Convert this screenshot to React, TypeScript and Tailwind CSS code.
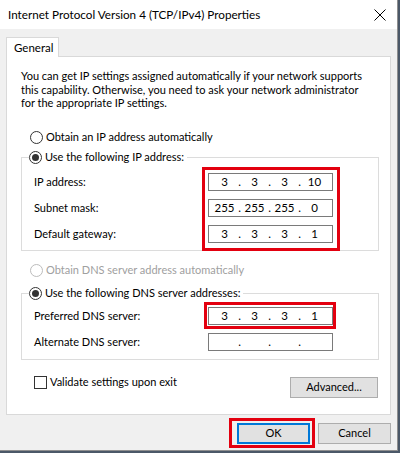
import React from "react";

const FONT = "font-['Lato','Noto_Sans',sans-serif]";

function Radio({ checked = false, disabled = false }: { checked?: boolean; disabled?: boolean }) {
  return (
    <span
      className={`w-[13px] h-[13px] shrink-0 rounded-full border bg-white flex items-center justify-center ${
        disabled ? "border-[#bcbcbc]" : "border-[#333333]"
      }`}
    >
      {checked && <span className="w-[7px] h-[7px] rounded-full bg-[#333333]" />}
    </span>
  );
}

function IpBox({ parts }: { parts: string[] }) {
  return (
    <div className="w-[125px] h-[18px] border border-[#7a7a7a] bg-white flex items-center pl-[4px] leading-none text-[11.5px]">
      {parts.map((p, i) => (
        <React.Fragment key={i}>
          <span className="w-[23px] text-center">{p}</span>
          {i < 3 && <span className="w-[7px] text-center">.</span>}
        </React.Fragment>
      ))}
    </div>
  );
}

function Row({ label, parts }: { label: string; parts: string[] }) {
  return (
    <div className="flex items-center h-[18px]">
      <span className="w-[174px]">{label}</span>
      <IpBox parts={parts} />
    </div>
  );
}

function Button({ label, primary = false }: { label: string; primary?: boolean }) {
  return (
    <div
      className={`w-[73px] h-[21px] flex items-center justify-center bg-[#e1e1e1] ${
        primary ? "border-2 border-[#0078d7]" : "border border-[#adadad]"
      }`}
    >
      {label}
    </div>
  );
}

export default function App() {
  return (
    <div className={`w-[400px] h-[453px] bg-[#4b5868] ${FONT} text-[11px] text-black`}>
      <div className="w-[398px] h-[451px] bg-[#f0f0f0] border-r border-b border-[#8f8f8f]">
        {/* title bar */}
        <div className="h-[29px] bg-white flex items-center justify-between pl-[8px] pr-[11px] text-[11.7px]">
          <span>Internet Protocol Version 4 (TCP/IPv4) Properties</span>
          <svg width="12" height="12" viewBox="0 0 12 12">
            <path d="M0.5 0.5 L11.5 11.5 M11.5 0.5 L0.5 11.5" stroke="#000" strokeWidth="1" fill="none" />
          </svg>
        </div>

        <div className="pt-[8px] pl-[6px]">
          {/* tab */}
          <div className="relative z-10 -mb-px w-[53px] h-[20px] bg-white border border-b-0 border-[#d9d9d9] flex items-center pl-[7px] text-[11.5px]">
            General
          </div>

          {/* panel */}
          <div className="w-[385px] h-[359px] bg-white border border-[#d9d9d9]">
            <p className="mt-[12px] ml-[14px] h-[41px] leading-[13.5px] whitespace-nowrap">
              You can get IP settings assigned automatically if your network supports
              <br />
              this capability. Otherwise, you need to ask your network administrator
              <br />
              for the appropriate IP settings.
            </p>

            <div className="mt-[19px] ml-[23px] h-[16px] flex items-center gap-[3px]">
              <Radio />
              <span>Obtain an IP address automatically</span>
            </div>

            <fieldset className="mt-[4px] ml-[14px] w-[358px] border border-[#dcdcdc] pb-[7px]">
              <legend className="ml-[7px] pr-[3px] h-[16px] flex items-center gap-[3px]">
                <Radio checked />
                <span>Use the following IP address:</span>
              </legend>
              <div className="mt-[8px] pl-[12px] flex">
                <div className="w-[174px] flex flex-col gap-[8px]">
                  <span className="h-[18px] flex items-center">IP address:</span>
                  <span className="h-[18px] flex items-center">Subnet mask:</span>
                  <span className="h-[18px] flex items-center">Default gateway:</span>
                </div>
                <div className="relative flex flex-col gap-[8px]">
                  <IpBox parts={["3", "3", "3", "10"]} />
                  <IpBox parts={["255", "255", "255", "0"]} />
                  <IpBox parts={["3", "3", "3", "1"]} />
                  <div className="absolute -left-[6px] -right-[7px] -top-[6px] -bottom-[8px] border-[3px] border-[#e3000f]" />
                </div>
              </div>
            </fieldset>

            <div className="mt-[11px] ml-[23px] h-[16px] flex items-center gap-[3px] text-[#a0a0a0]">
              <Radio disabled />
              <span>Obtain DNS server address automatically</span>
            </div>

            <fieldset className="mt-[7px] ml-[14px] w-[358px] border border-[#dcdcdc] pb-[8px]">
              <legend className="ml-[7px] pr-[3px] h-[16px] flex items-center gap-[3px]">
                <Radio checked />
                <span>Use the following DNS server addresses:</span>
              </legend>
              <div className="mt-[6px] pl-[12px] flex flex-col gap-[8px]">
                <div className="flex items-center h-[18px]">
                  <span className="w-[174px]">Preferred DNS server:</span>
                  <div className="relative">
                    <IpBox parts={["3", "3", "3", "1"]} />
                    <div className="absolute -left-[4px] -right-[3px] -top-[5px] -bottom-[4px] border-[3px] border-[#e3000f]" />
                  </div>
                </div>
                <Row label="Alternate DNS server:" parts={["", "", "", ""]} />
              </div>
            </fieldset>

            <div className="mt-[16px] pl-[27px] pr-[12px] flex items-start justify-between">
              <div className="flex items-center gap-[3px] h-[13px]">
                <span className="w-[13px] h-[13px] border border-[#333333] bg-white" />
                <span>Validate settings upon exit</span>
              </div>
              <div className="mt-[1px] w-[88px] h-[21px] bg-[#e1e1e1] border border-[#adadad] flex items-center justify-center">
                Advanced...
              </div>
            </div>
          </div>

          {/* dialog buttons */}
          <div className="mt-[8px] pr-[6px] flex justify-end gap-[8px]">
            <div className="relative">
              <Button label="OK" primary />
              <div className="absolute -left-[8px] -right-[5px] -top-[5px] -bottom-[4px] border-[3px] border-[#e3000f]" />
            </div>
            <Button label="Cancel" />
          </div>
        </div>
      </div>
    </div>
  );
}
